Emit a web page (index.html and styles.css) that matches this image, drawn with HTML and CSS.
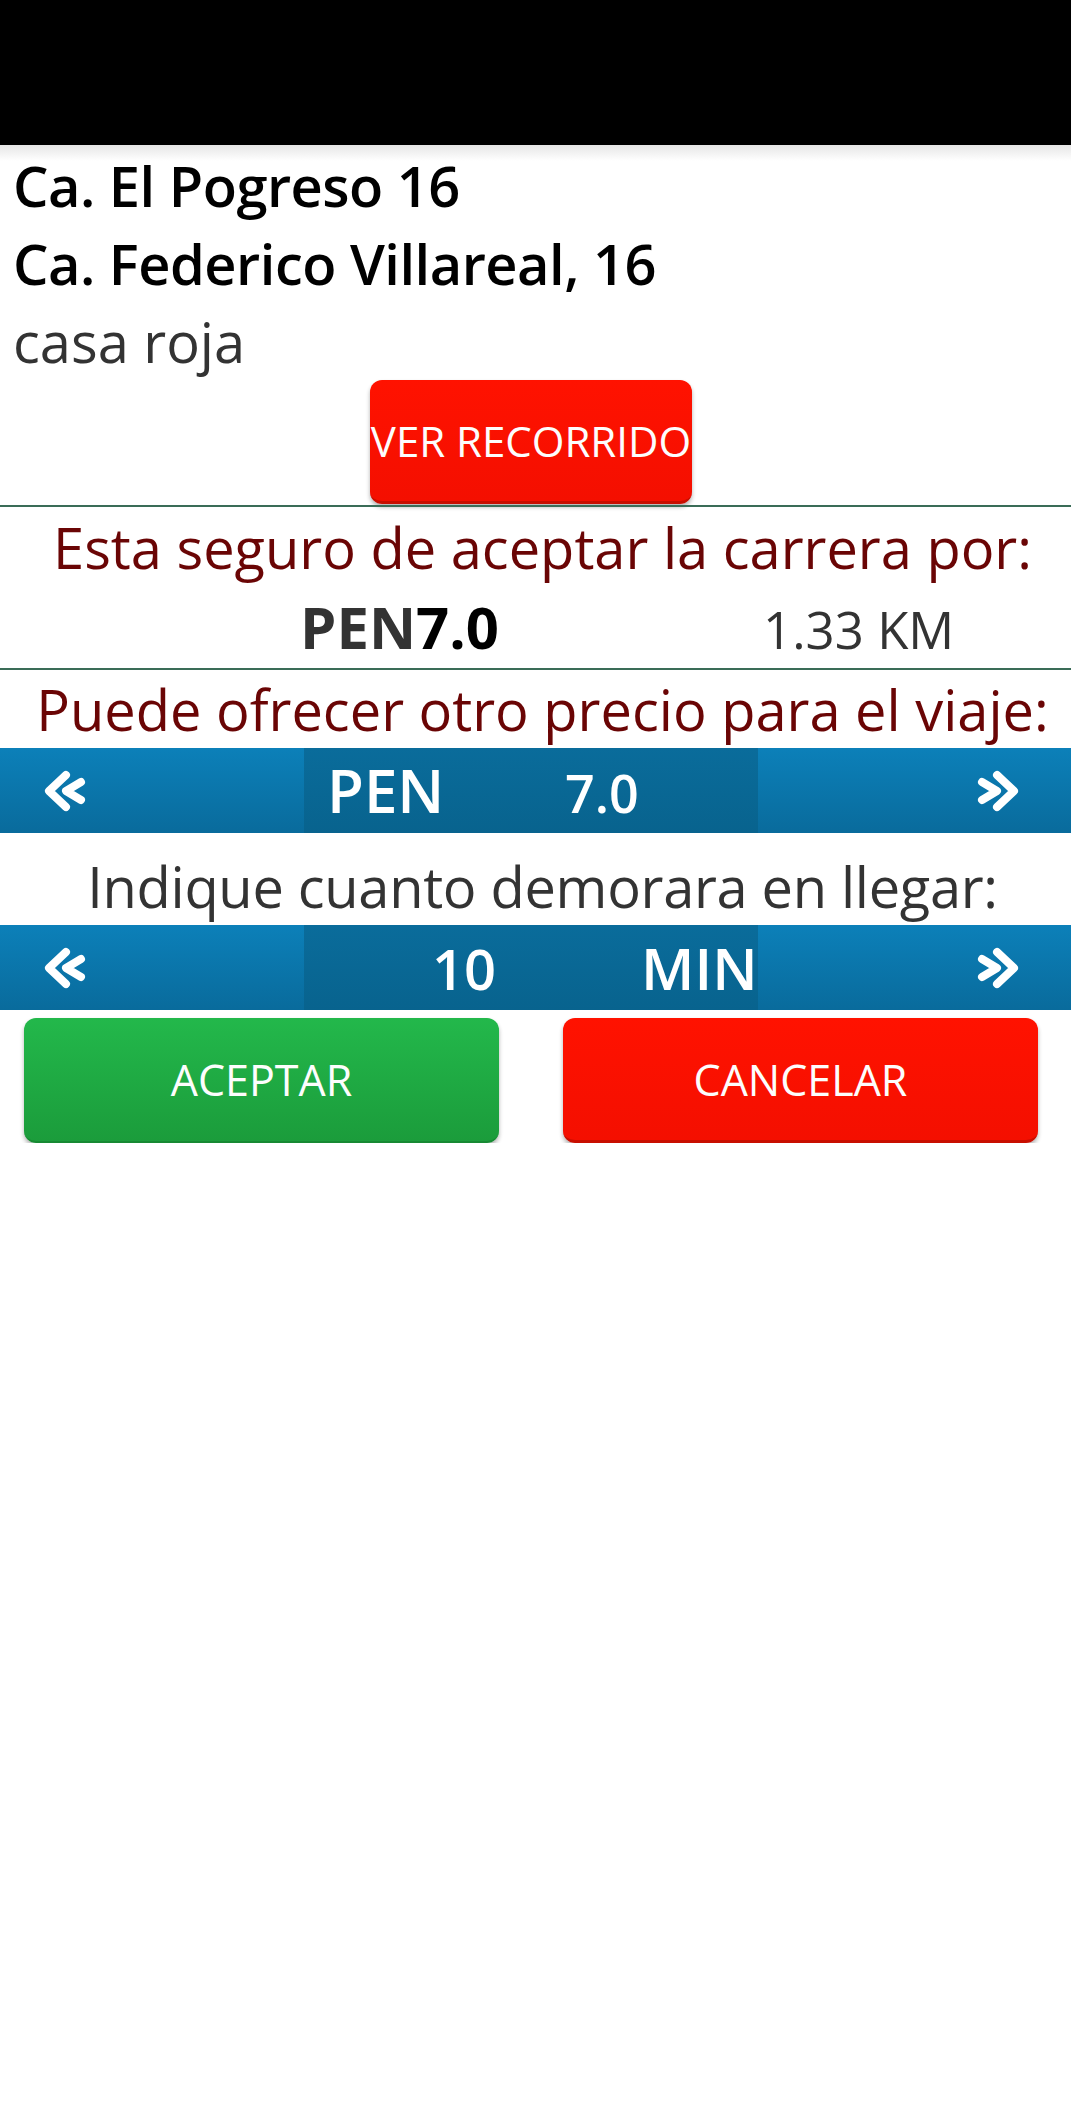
FILE: index.html
```html
<!DOCTYPE html>
<html lang="es">
<head>
    <meta charset="UTF-8">
    <meta name="viewport" content="width=device-width, initial-scale=1.0">
    <title>Aceptar carrera</title>
    <link rel="stylesheet" href="styles.css">
</head>
<body>
    <div class="status-bar"></div>

    <div class="info">
        <div class="address">Ca. El Pogreso 16</div>
        <div class="address">Ca. Federico Villareal, 16</div>
        <div class="reference">casa roja</div>
        <button class="btn btn-red btn-route">VER RECORRIDO</button>
    </div>

    <div class="divider"></div>

    <div class="question">Esta seguro de aceptar la carrera por:</div>
    <div class="fare">
        <div><span class="fare-currency">PEN</span><span class="fare-amount">7.0</span></div>
        <div class="fare-distance">1.33 KM</div>
    </div>

    <div class="divider"></div>

    <div class="question offer">Puede ofrecer otro precio para el viaje:</div>
    <div class="stepper">
        <div class="stepper-side">
            <svg class="chevron" viewBox="0 0 50 48"><path d="M26 8 L9 24 L26 40 M41 15 L26 24 L41 33"/></svg>
        </div>
        <div class="stepper-value price">
            <span class="unit">PEN</span>
            <span class="num">7.0</span>
        </div>
        <div class="stepper-side right">
            <svg class="chevron flip" viewBox="0 0 50 48"><path d="M26 8 L9 24 L26 40 M41 15 L26 24 L41 33"/></svg>
        </div>
    </div>

    <div class="prompt">Indique cuanto demorara en llegar:</div>
    <div class="stepper">
        <div class="stepper-side">
            <svg class="chevron" viewBox="0 0 50 48"><path d="M26 8 L9 24 L26 40 M41 15 L26 24 L41 33"/></svg>
        </div>
        <div class="stepper-value time">
            <span class="num">10</span>
            <span class="unit">MIN</span>
        </div>
        <div class="stepper-side right">
            <svg class="chevron flip" viewBox="0 0 50 48"><path d="M26 8 L9 24 L26 40 M41 15 L26 24 L41 33"/></svg>
        </div>
    </div>

    <div class="actions">
        <button class="btn btn-green">ACEPTAR</button>
        <button class="btn btn-red">CANCELAR</button>
    </div>
</body>
</html>
```

FILE: styles.css
```css
body {
    margin: 0;
    padding: 0;
    font-family: "Open Sans", "Noto Sans", sans-serif;
    background-color: #fff;
    color: #333;
}
.status-bar {
    height: 145px;
    background-color: #000;
}
.info {
    padding-top: 1px;
    background: linear-gradient(#e6e6e6, #fff 16px);
}
.address {
    padding-left: 13px;
    font-size: 56px;
    font-weight: 600;
    line-height: 78px;
    letter-spacing: -0.5px;
    color: #000;
    white-space: nowrap;
}
.reference {
    padding-left: 13px;
    font-size: 56px;
    line-height: 78px;
    color: #333;
}
.btn {
    display: flex;
    align-items: center;
    justify-content: center;
    border: none;
    border-radius: 12px;
    padding: 0;
    font-family: "Open Sans", "Noto Sans", sans-serif;
    font-weight: 500;
    color: #fdfdfd;
    white-space: nowrap;
    box-shadow: 0 3px 4px rgba(0, 0, 0, 0.3);
}
.btn-red {
    background: linear-gradient(#ff1200, #f40f00);
    border-bottom: 3px solid #c80e00;
}
.btn-green {
    background: linear-gradient(#23b84b, #1b9c3b);
    border-bottom: 2px solid #178a33;
}
.btn-route {
    width: 322px;
    height: 124px;
    margin-left: 370px;
    font-size: 42px;
    overflow: hidden;
}
.divider {
    height: 2px;
    margin-top: 1px;
    background-color: #3a6c57;
}
.question {
    height: 80px;
    padding-left: 14px;
    font-size: 56px;
    line-height: 80px;
    text-align: center;
    color: #6a0505;
    white-space: nowrap;
}
.question.offer {
    height: 78px;
    line-height: 78px;
}
.fare {
    display: grid;
    grid-template-columns: 463px auto;
    align-items: baseline;
    height: 80px;
    padding-left: 300px;
    line-height: 80px;
    white-space: nowrap;
}
.fare-currency {
    font-size: 58px;
    font-weight: 700;
    color: #333;
}
.fare-amount {
    font-size: 58px;
    font-weight: 700;
    color: #000;
}
.fare-distance {
    font-size: 51px;
    color: #333;
}
.stepper {
    display: flex;
    height: 85px;
    background: linear-gradient(#0c80b9, #096b9c);
    color: #fff;
}
.stepper-side {
    flex: none;
    display: flex;
    align-items: center;
    width: 304px;
    padding-left: 40px;
    box-sizing: border-box;
}
.stepper-side.right {
    width: 313px;
    padding-left: 0;
    padding-right: 48px;
    justify-content: flex-end;
}
.chevron {
    width: 50px;
    height: 48px;
    fill: none;
    stroke: #fff;
    stroke-width: 8;
    stroke-linecap: round;
    stroke-linejoin: round;
}
.chevron.flip {
    transform: scaleX(-1);
}
.stepper-value {
    flex: none;
    display: grid;
    align-items: baseline;
    width: 454px;
    min-width: 0;
    box-sizing: border-box;
    background: linear-gradient(#0a6c9b, #08638e);
    line-height: 85px;
    font-weight: 600;
    white-space: nowrap;
}
.price {
    grid-template-columns: 238px auto;
    padding-left: 23px;
}
.price .unit {
    font-size: 60px;
}
.price .num {
    font-size: 52px;
}
.time {
    grid-template-columns: 209px auto;
    padding-left: 128px;
}
.time .num {
    font-size: 56px;
}
.time .unit {
    font-size: 58px;
}
.prompt {
    padding-top: 14px;
    padding-left: 14px;
    font-size: 56px;
    line-height: 78px;
    letter-spacing: -0.3px;
    text-align: center;
    color: #333;
    white-space: nowrap;
}
.actions {
    display: flex;
    justify-content: space-between;
    padding: 8px 33px 0 24px;
}
.actions .btn {
    width: 475px;
    height: 125px;
    font-size: 43px;
}
```
